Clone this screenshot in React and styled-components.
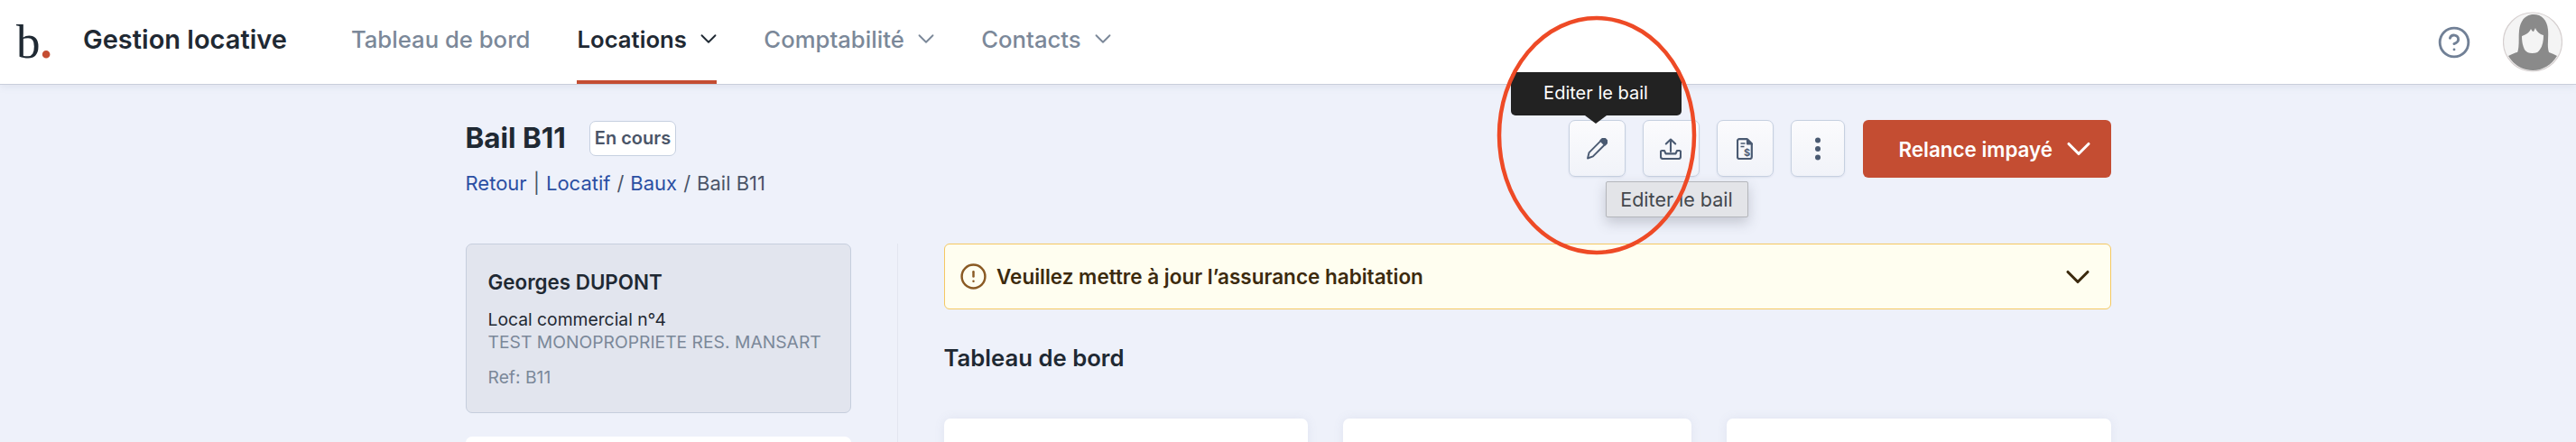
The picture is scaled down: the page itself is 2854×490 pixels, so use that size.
import React from "react";
import styled, { createGlobalStyle } from "styled-components";
import { ChevronDown, CircleAlert, CircleHelp } from "lucide-react";

const GlobalStyle = createGlobalStyle`
  html, body {
    margin: 0;
    padding: 0;
    background: #eef1fa;
  }
  * {
    box-sizing: border-box;
  }
`;

const Page = styled.div`
  position: relative;
  width: 2854px;
  height: 490px;
  overflow: hidden;
  background: #eef1fa;
  font-family: Inter, "Liberation Sans", sans-serif;
  color: #1f2933;
`;

const Header = styled.header`
  display: flex;
  align-items: center;
  height: 94px;
  padding: 0 15px 0 18px;
  background: #fff;
  border-bottom: 1px solid #c9cedb;
  box-shadow: 0 2px 8px rgba(110, 120, 150, 0.12);
`;

const Logo = styled.div`
  display: flex;
  align-items: baseline;
  width: 74px;
  font-family: "Liberation Serif", serif;
  font-size: 53px;
  line-height: 53px;
  color: #1f2933;
`;

const LogoDot = styled.span`
  color: #c44d32;
  font-weight: 700;
`;

const AppName = styled.div`
  font-size: 29px;
  font-weight: 600;
  color: #1f2933;
  margin: 0 71px 6px 0;
  white-space: nowrap;
`;

const Nav = styled.nav`
  display: flex;
  align-items: stretch;
  gap: 52px;
  height: 93px;
  flex: 1;
`;

const NavItem = styled.div`
  display: flex;
  align-items: center;
  gap: 16px;
  padding-bottom: 3px;
  font-size: 25.7px;
  font-weight: ${(p) => (p.$active ? 600 : 500)};
  color: ${(p) => (p.$active ? "#1f2933" : "#7b8899")};
  border-bottom: 4px solid ${(p) => (p.$active ? "#c44d32" : "transparent")};
  white-space: nowrap;
`;

const NavChevron = styled(ChevronDown)`
  margin: 0 -5.5px 0 -7px;
`;

const HeaderRight = styled.div`
  display: flex;
  align-items: center;
  gap: 35px;
  color: #718096;
`;

const Avatar = styled.svg`
  display: block;
  width: 66px;
  height: 67px;
`;

const Content = styled.main`
  width: 1823px;
  margin: 0 auto;
`;

const TopRow = styled.div`
  display: flex;
  justify-content: space-between;
  align-items: flex-start;
  height: 176px;
  padding-top: 39px;
`;

const TitleRow = styled.div`
  display: flex;
  align-items: center;
  gap: 26px;
  height: 40px;
`;

const Title = styled.h1`
  margin: 0;
  font-size: 31.4px;
  font-weight: 700;
  color: #1f2933;
`;

const Badge = styled.span`
  display: flex;
  align-items: center;
  height: 39px;
  padding: 0 5px;
  background: #fff;
  border: 1.5px solid #c6d0e0;
  border-radius: 7px;
  font-size: 20px;
  font-weight: 600;
  color: #4a5568;
`;

const Breadcrumb = styled.div`
  display: flex;
  align-items: center;
  gap: 7px;
  margin-top: 12px;
  font-size: 22px;
  line-height: 36px;
  color: #4a5568;
`;

const Crumb = styled.a`
  color: #2b4fa3;
`;

const Actions = styled.div`
  display: flex;
  align-items: flex-start;
`;

const IconButton = styled.button`
  position: relative;
  display: flex;
  align-items: center;
  justify-content: center;
  width: ${(p) => p.$width || 63}px;
  height: 63px;
  margin-right: ${(p) => p.$gap || 19}px;
  padding: 0;
  background: linear-gradient(#fbfbfd, #f1f3f9);
  border: 1px solid #c6d0e0;
  border-radius: 7px;
  box-shadow: 0 1px 2px rgba(120, 130, 160, 0.15);
  color: #4a5a72;
`;

const DarkTooltip = styled.div`
  position: absolute;
  left: -65px;
  top: -54px;
  display: flex;
  align-items: center;
  justify-content: center;
  width: 189px;
  height: 48px;
  padding-bottom: 2px;
  background: #222;
  border-radius: 5px;
  font-family: Inter, sans-serif;
  font-size: 20px;
  color: #fff;

  &::after {
    content: "";
    position: absolute;
    left: 82px;
    bottom: -9px;
    border-left: 12px solid transparent;
    border-right: 12px solid transparent;
    border-top: 9px solid #222;
  }
`;

const NativeTooltip = styled.div`
  position: absolute;
  left: 40px;
  top: 67px;
  display: flex;
  align-items: center;
  justify-content: center;
  width: 158px;
  height: 40px;
  background: #e3e4e8;
  border: 1px solid #b4b6bb;
  border-radius: 2px;
  box-shadow: 0 6px 14px rgba(70, 75, 90, 0.25);
  font-family: Inter, sans-serif;
  font-size: 21.5px;
  color: #44474d;
  z-index: 2;
`;

const PrimaryButton = styled.button`
  display: flex;
  align-items: center;
  gap: 7px;
  width: 275px;
  height: 64px;
  padding: 0 0 0 40px;
  background: #c44d32;
  border: 0;
  border-radius: 6px;
  font-family: Inter, sans-serif;
  font-size: 22.4px;
  font-weight: 600;
  color: #fff;
`;

const Body = styled.div`
  display: grid;
  grid-template-columns: 479px 1fr;
`;

const Sidebar = styled.aside`
  padding-right: 51px;
  border-right: 1px solid #e2e6f0;
  height: 230px;
`;

const TenantCard = styled.div`
  height: 188px;
  padding: 27px 24px;
  background: #e2e5ee;
  border: 1px solid #c6cedd;
  border-radius: 7px;
`;

const TenantName = styled.div`
  font-size: 22.4px;
  line-height: 30px;
  font-weight: 600;
  color: #1f2933;
`;

const TenantLine = styled.div`
  font-size: 19.3px;
  line-height: 25px;
  white-space: nowrap;
  color: ${(p) => (p.$muted ? "#7b8899" : "#1f2933")};
  margin-top: ${(p) => p.$top || 0}px;
`;

const SideCard = styled.div`
  height: 60px;
  margin-top: 26px;
  background: #fff;
  border-radius: 7px 7px 0 0;
`;

const Main = styled.div`
  padding-left: 51px;
`;

const Alert = styled.div`
  display: flex;
  align-items: center;
  gap: 10.5px;
  height: 73px;
  padding: 0 14px 0 16px;
  background: #fffef0;
  border: 1px solid #f4c862;
  border-radius: 6px;
  font-size: 22.5px;
  font-weight: 600;
  color: #3c2a0e;
`;

const AlertText = styled.span`
  flex: 1;
`;

const SectionTitle = styled.h2`
  margin: 36px 0 0;
  height: 85px;
  font-size: 25.7px;
  line-height: 36px;
  font-weight: 600;
  color: #1f2933;
`;

const CardGrid = styled.div`
  display: grid;
  grid-template-columns: 403px 386px 1fr;
  gap: 39px;
`;

const DashCard = styled.div`
  height: 80px;
  background: #fff;
  border-radius: 7px 7px 0 0;
  box-shadow: 0 0 12px rgba(110, 120, 160, 0.1);
`;

const Annotation = styled.svg`
  position: absolute;
  left: 1655px;
  top: 14px;
  width: 228px;
  height: 272px;
  z-index: 3;
  pointer-events: none;
`;

function PencilIcon() {
  return (
    <svg width="24" height="24" viewBox="0 0 24 24" fill="none" stroke="currentColor" strokeWidth="1.9" strokeLinejoin="round">
      <path d="M2 22.5l1.6-6.4L16.5 3.2l4.3 4.3L7.9 20.4z" />
      <path d="M16.4 2.6l1.5-1.4a2.6 2.6 0 0 1 3.7 0l1.2 1.2a2.6 2.6 0 0 1 0 3.7l-1.5 1.5z" fill="currentColor" />
    </svg>
  );
}

function UploadIcon() {
  return (
    <svg width="24" height="24" viewBox="0 0 24 24" fill="none" stroke="currentColor" strokeWidth="2.1" strokeLinecap="round" strokeLinejoin="round">
      <path d="M12 15V1.5M6.8 6.5L12 1.5l5.2 5" />
      <path d="M5 14H2.2A1.2 1.2 0 0 0 1 15.2v5.6A2.2 2.2 0 0 0 3.2 23h17.6a2.2 2.2 0 0 0 2.2-2.2v-5.6a1.2 1.2 0 0 0-1.2-1.2H19l-1.5 3.4h-11z" />
    </svg>
  );
}

function InvoiceIcon() {
  return (
    <svg width="18" height="24" viewBox="0 0 18 24" fill="none" stroke="currentColor" strokeWidth="2.2" strokeLinejoin="round">
      <path d="M3 1.2h8.5l5.3 5.6V21a2 2 0 0 1-2 2H3a2 2 0 0 1-2-2V3.2a2 2 0 0 1 2-2z" />
      <path d="M4.5 6h5M4.5 9.5h4" strokeWidth="1.4" />
      <path d="M12 1.5l5 5h-5z" fill="currentColor" />
      <text x="11.5" y="20" textAnchor="middle" fontFamily="Inter, sans-serif" fontSize="11" fontWeight="700" fill="currentColor" stroke="none">$</text>
    </svg>
  );
}

function DotsIcon() {
  return (
    <svg width="8" height="26" viewBox="0 0 8 26" fill="currentColor">
      <circle cx="4" cy="3.5" r="3" />
      <circle cx="4" cy="13" r="3" />
      <circle cx="4" cy="22.5" r="3" />
    </svg>
  );
}

export default function App() {
  return (
    <Page>
      <GlobalStyle />
      <Header>
        <Logo>
          b<LogoDot>.</LogoDot>
        </Logo>
        <AppName>Gestion locative</AppName>
        <Nav>
          <NavItem>Tableau de bord</NavItem>
          <NavItem $active>
            Locations <NavChevron size={30} strokeWidth={1.5} />
          </NavItem>
          <NavItem>
            Comptabilité <NavChevron size={30} strokeWidth={1.5} />
          </NavItem>
          <NavItem>
            Contacts <NavChevron size={30} strokeWidth={1.5} />
          </NavItem>
        </Nav>
        <HeaderRight>
          <CircleHelp size={38} strokeWidth={1.8} />
          <Avatar viewBox="0 0 66 67">
            <circle cx="33" cy="33.5" r="32.5" fill="#f4f4f4" stroke="#d6d0d0" strokeWidth="1.2" />
            <path d="M15 48C19 40 17 30 18 21 19 9 26 3 34 3c9 0 15 6 16 17 1 10-2 20 2 27-3 3-8 3-11 1h-16c-3 2-7 2-10 0z" fill="#8a8a8a" />
            <path d="M21 27c3-1 8-3 10-8 1 2 2 3 3 3l2-4c1 3 4 7 9 8 0 6-1 12-4 16-2 3-5 5-8 5s-7-2-9-5c-2-4-3-9-3-15z" fill="#f4f4f4" />
            <path d="M6 49c5-3 11-5 18-6 3 4 14 4 18 0 7 1 13 3 18 6-6 10-16 16-27 16S12 59 6 49z" fill="#8a8a8a" />
          </Avatar>
        </HeaderRight>
      </Header>

      <Content>
        <TopRow>
          <div>
            <TitleRow>
              <Title>Bail B11</Title>
              <Badge>En cours</Badge>
            </TitleRow>
            <Breadcrumb>
              <Crumb>Retour</Crumb> | <Crumb>Locatif</Crumb> / <Crumb>Baux</Crumb> / <span>Bail B11</span>
            </Breadcrumb>
          </div>
          <Actions>
            <IconButton>
              <PencilIcon />
              <DarkTooltip>Editer le bail</DarkTooltip>
              <NativeTooltip>Editer le bail</NativeTooltip>
            </IconButton>
            <IconButton>
              <UploadIcon />
            </IconButton>
            <IconButton>
              <InvoiceIcon />
            </IconButton>
            <IconButton $width={60} $gap={20}>
              <DotsIcon />
            </IconButton>
            <PrimaryButton>
              Relance impayé <ChevronDown size={44} strokeWidth={1.7} />
            </PrimaryButton>
          </Actions>
        </TopRow>

        <Body>
          <Sidebar>
            <TenantCard>
              <TenantName>Georges DUPONT</TenantName>
              <TenantLine $top={13.5}>Local commercial n°4</TenantLine>
              <TenantLine $muted>TEST MONOPROPRIETE RES. MANSART</TenantLine>
              <TenantLine $muted $top={14}>Ref: B11</TenantLine>
            </TenantCard>
            <SideCard />
          </Sidebar>
          <Main>
            <Alert>
              <CircleAlert size={31} strokeWidth={1.9} color="#8a5a24" />
              <AlertText>Veuillez mettre à jour l’assurance habitation</AlertText>
              <ChevronDown size={44} strokeWidth={1.7} />
            </Alert>
            <SectionTitle>Tableau de bord</SectionTitle>
            <CardGrid>
              <DashCard />
              <DashCard />
              <DashCard />
            </CardGrid>
          </Main>
        </Body>
      </Content>

      <Annotation viewBox="0 0 228 272">
        <ellipse cx="114" cy="136" rx="108" ry="130" fill="none" stroke="#ee4a26" strokeWidth="4.5" />
      </Annotation>
    </Page>
  );
}
